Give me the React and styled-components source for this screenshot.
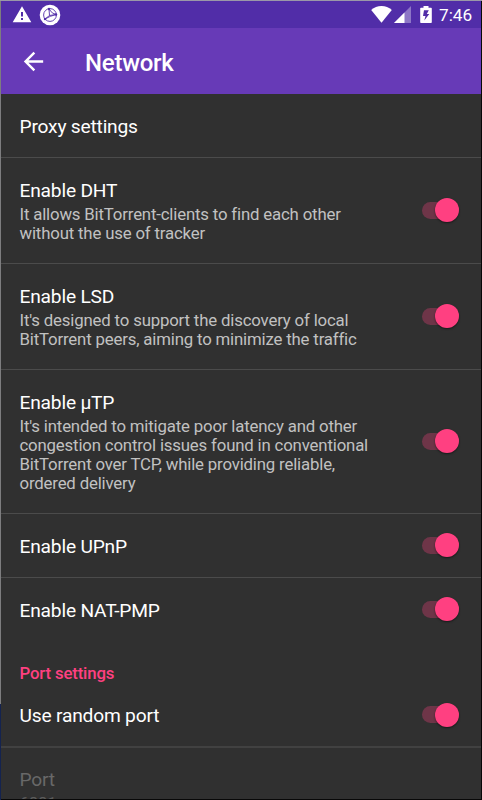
import React from 'react';
import styled, { createGlobalStyle } from 'styled-components';

const GlobalStyle = createGlobalStyle`
  * { box-sizing: border-box; }
  body { margin: 0; background: #303030; font-family: Roboto, sans-serif; }
`;

const Frame = styled.div`
  width: 482px;
  height: 800px;
  padding: 1px;
  background: linear-gradient(#9a98a8, #9a98a8) 0 0 / 482px 1px no-repeat,
    linear-gradient(#7d7d7f 704px, #14234f 704px) 0 0 / 1px 800px no-repeat,
    #080808;
`;

const Screen = styled.main`
  height: 798px;
  overflow: hidden;
  display: flex;
  flex-direction: column;
  background: #303030;
`;

const StatusBar = styled.div`
  height: 27px;
  flex: none;
  display: flex;
  align-items: center;
  justify-content: space-between;
  padding: 0 8px 0 11px;
  background: #512da8;
  color: #fff;
`;

const StatusGroup = styled.div`
  display: flex;
  align-items: center;
  height: 27px;
  svg { display: block; }
`;

const IconGap = styled.span`
  width: ${(p) => p.$size}px;
  flex: none;
`;

const Clock = styled.span`
  width: 34px;
  margin-left: 7px;
  padding-top: 1px;
  font-size: 17.2px;
  line-height: 27px;
  white-space: nowrap;
`;

const AppBar = styled.header`
  height: 66px;
  flex: none;
  display: flex;
  align-items: center;
  padding-left: 18px;
  background: #673ab7;
  color: #fff;
  svg { display: block; }
`;

const Title = styled.h1`
  margin: 0 0 0 37px;
  padding-top: 3px;
  font-size: 24px;
  font-weight: 500;
  letter-spacing: -0.25px;
  line-height: 28px;
`;

const Row = styled.section`
  height: ${(p) => p.$height}px;
  flex: none;
  display: flex;
  align-items: center;
  justify-content: space-between;
  padding: 0 22px 0 18.5px;
  border-bottom: ${(p) => p.$line ?? 1}px solid ${(p) => (p.$line === 2 ? '#414141' : '#4b4b4b')};
`;

const RowText = styled.div`
  padding-top: ${(p) => p.$offset}px;
`;

const Label = styled.div`
  color: ${(p) => (p.$disabled ? '#686868' : '#fff')};
  font-size: 19.2px;
  letter-spacing: -0.2px;
  line-height: 23px;
  white-space: nowrap;
`;

const Summary = styled.div`
  margin-top: 3px;
  color: ${(p) => (p.$disabled ? '#5c5c5c' : '#c1c1c1')};
  font-size: 16.8px;
  letter-spacing: -0.17px;
  line-height: 19px;
  white-space: pre;
`;

const Category = styled.h2`
  margin: 0;
  height: 43px;
  flex: none;
  padding: 22px 0 0 18.5px;
  color: #ff4081;
  font-size: 16.8px;
  font-weight: 500;
  letter-spacing: -0.16px;
  line-height: 20px;
`;

const Track = styled.div`
  width: 37px;
  height: 17px;
  flex: none;
  display: flex;
  align-items: center;
  justify-content: flex-end;
  margin-bottom: 1px;
  border-radius: 9px;
  background: #6e3548;
`;

const Thumb = styled.div`
  width: 24px;
  height: 24px;
  flex: none;
  border-radius: 50%;
  background: #ff4081;
  box-shadow: 0 1px 2px rgba(0, 0, 0, 0.5);
`;

const PortRow = styled.section`
  height: 70px;
  flex: none;
  padding: 20px 18.5px 0;
`;

const Switch = () => (
  <Track role="switch" aria-checked="true">
    <Thumb />
  </Track>
);

const WarningIcon = () => (
  <svg width="20" height="17" viewBox="0 0 20 17">
    <path fill="#fff" fillRule="evenodd" d="M10 .3 19.300 16.300H.7ZM9 6v4.500h2V6ZM9 12v2h2v-2Z" />
  </svg>
);

const TorrentIcon = () => (
  <svg width="22" height="22" viewBox="0 0 22 22">
    <circle cx="11" cy="11" r="10.3" fill="#fff" />
    <g fill="none" stroke="#512da8" strokeWidth=".9">
      <circle cx="11" cy="11" r="6.4" />
      <path d="M10.500 11.500 10 5M10.500 11.500l6.500-1M10.500 11.500l-4.500 3.500M10 5q3 5 7 5.500M17 10.500Q11 12 6 15" />
    </g>
    <g fill="#512da8">
      <circle cx="10" cy="5" r="1.2" />
      <circle cx="17" cy="10.5" r="1.2" />
      <circle cx="6" cy="15" r="1.2" />
    </g>
  </svg>
);

const WifiIcon = () => (
  <svg width="21" height="17" viewBox="0 0 21 17">
    <path fill="#fff" d="M10.500 16.700.2 4.100C3.100 1.500 6.600 0 10.500 0s7.400 1.500 10.300 4.100Z" />
  </svg>
);

const SignalIcon = () => (
  <svg width="17" height="17" viewBox="0 0 17 17">
    <path fill="#fff" fillOpacity=".35" d="M17 0v17H0Z" />
    <path fill="#fff" d="M10.500 6.500V17H0Z" />
  </svg>
);

const BatteryIcon = () => (
  <svg width="12" height="17" viewBox="0 0 12 17">
    <path
      fill="#fff"
      fillRule="evenodd"
      d="M3.500 0h5v1.700H11q.8 0 .8.8v13.700q0 .8-.8.8H1q-.8 0-.8-.8V2.500q0-.8.8-.8h2.500ZM4 4.300 3 10h2.500l-1.200 4.400L9.300 8H6.800l2-3.700Z"
    />
  </svg>
);

const BackIcon = () => (
  <svg width="29" height="29" viewBox="0 0 24 24">
    <path fill="#fff" d="M20 11H7.830l5.590-5.590L12 4l-8 8 8 8 1.410-1.410L7.830 13H20v-2z" />
  </svg>
);

const settings = [
  { label: 'Proxy settings', height: 64, offset: 2 },
  { label: 'Enable DHT', height: 106, on: true, text: 'It allows BitTorrent-clients to find each other\nwithout the use of tracker' },
  { label: 'Enable LSD', height: 106, on: true, text: "It's designed to support the discovery of local\nBitTorrent peers, aiming to minimize the traffic" },
  { label: 'Enable µTP', height: 144, on: true, text: "It's intended to mitigate poor latency and other\ncongestion control issues found in conventional\nBitTorrent over TCP, while providing reliable,\nordered delivery" },
  { label: 'Enable UPnP', height: 64, offset: 2, on: true },
  { label: 'Enable NAT-PMP', height: 63, offset: 2, on: true, line: 0 },
];

const randomPort = { label: 'Use random port', height: 64, on: true, line: 2 };

const Setting = ({ item }) => (
  <Row $height={item.height} $line={item.line}>
    <RowText $offset={item.offset ?? 0}>
      <Label>{item.label}</Label>
      {item.text && <Summary>{item.text}</Summary>}
    </RowText>
    {item.on && <Switch />}
  </Row>
);

export default function App() {
  return (
    <>
      <GlobalStyle />
      <Frame>
        <Screen>
          <StatusBar>
            <StatusGroup>
              <WarningIcon />
              <IconGap $size={7} />
              <TorrentIcon />
            </StatusGroup>
            <StatusGroup>
              <WifiIcon />
              <IconGap $size={2} />
              <SignalIcon />
              <IconGap $size={9} />
              <BatteryIcon />
              <Clock>7:46</Clock>
            </StatusGroup>
          </StatusBar>
          <AppBar>
            <BackIcon />
            <Title>Network</Title>
          </AppBar>
          {settings.map((item) => (
            <Setting key={item.label} item={item} />
          ))}
          <Category>Port settings</Category>
          <Setting item={randomPort} />
          <PortRow>
            <Label $disabled>Port</Label>
            <Summary $disabled>6881</Summary>
          </PortRow>
        </Screen>
      </Frame>
    </>
  );
}
